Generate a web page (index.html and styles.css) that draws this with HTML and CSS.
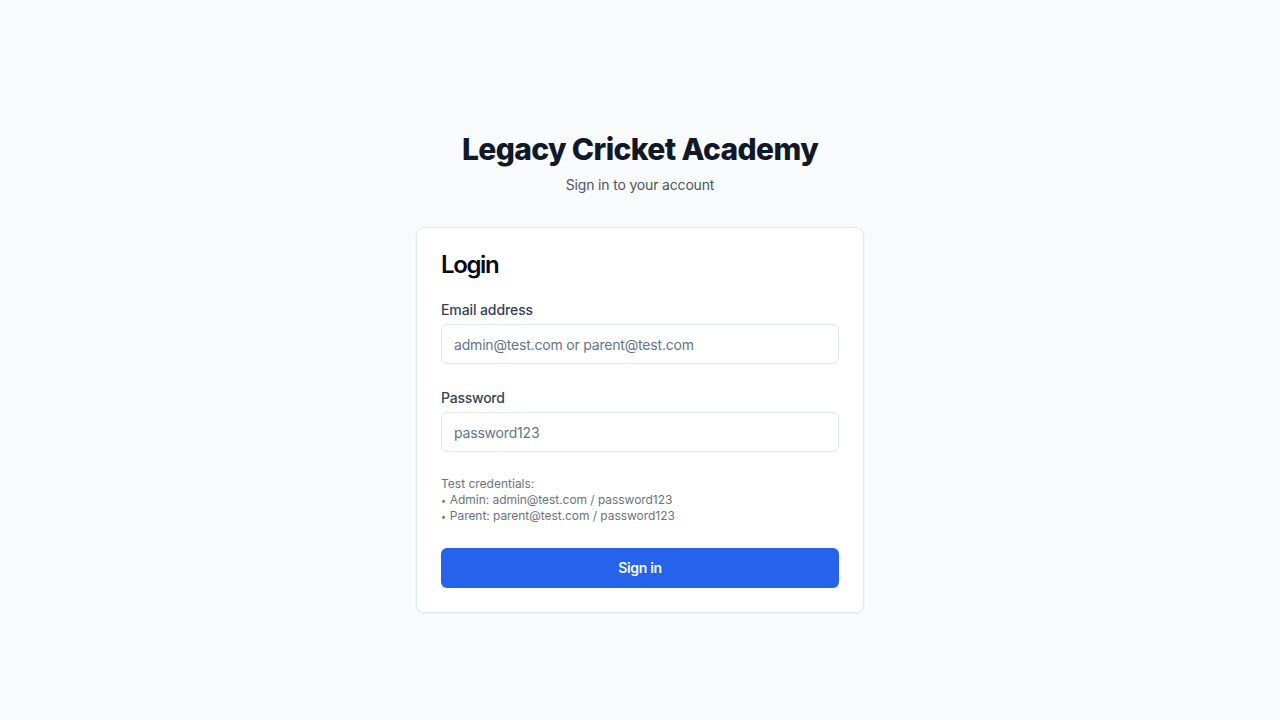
FILE: index.html
```html
<!DOCTYPE html>
<html lang="en">
<head>
<meta charset="utf-8">
<title>Legacy Cricket Academy</title>
<link rel="stylesheet" href="styles.css">
</head>
<body>
<main class="page">
  <header class="header">
    <h1 class="brand">Legacy Cricket Academy</h1>
    <p class="subtitle">Sign in to your account</p>
  </header>
  <section class="card">
    <h2 class="title">Login</h2>
    <form class="form">
      <div class="field">
        <label class="label" for="email">Email address</label>
        <input class="input" id="email" type="email" placeholder="admin@test.com or parent@test.com">
      </div>
      <div class="field">
        <label class="label label-password" for="password">Password</label>
        <input class="input" id="password" type="password" placeholder="password123">
      </div>
      <div class="hints">
        <p class="hint hint-title">Test credentials:</p>
        <p class="hint"><span class="bullet">•</span> Admin: admin@test.com / password123</p>
        <p class="hint"><span class="bullet">•</span> Parent: parent@test.com / password123</p>
      </div>
      <button class="button" type="button">Sign in</button>
    </form>
  </section>
</main>
</body>
</html>
```
FILE: styles.css
```css
* { box-sizing: border-box; margin: 0; }
body { font-family: Inter, sans-serif; background: #f9fafb; color: #020817; }
.page { min-height: 100vh; width: 448px; margin: 0 auto; display: flex; flex-direction: column; justify-content: center; padding-top: 24px; }
.header { text-align: center; padding-bottom: 32px; }
.brand { font-size: 30px; line-height: 36px; font-weight: 800; letter-spacing: -0.61px; color: #111827; }
.subtitle { margin-top: 8px; font-size: 14px; line-height: 20px; letter-spacing: -0.17px; color: #4b5563; }
.card { height: 386px; background: #fff; border: 1px solid #e2e8f0; border-radius: 8px; padding: 24px; box-shadow: 0 1px 2px rgba(0,0,0,.05); }
.title { padding-top: 1px; font-size: 24px; line-height: 24px; font-weight: 600; letter-spacing: -1.4px; }
.form { display: flex; flex-direction: column; gap: 24px; padding-top: 23px; }
.field { display: flex; flex-direction: column; gap: 4px; }
.label { font-size: 14px; line-height: 20px; font-weight: 500; letter-spacing: -0.1px; color: #374151; }
.label-password { letter-spacing: -0.24px; }
.input { width: 100%; height: 40px; padding: 8px 12px; border: 1px solid #e2e8f0; border-radius: 6px; font: 14px/20px Inter, sans-serif; letter-spacing: -0.19px; background: #fff; }
.input::placeholder { color: #64748b; opacity: 1; }
.hint { font-size: 12px; line-height: 16px; letter-spacing: -0.05px; color: #6b7280; }
.hint-title { letter-spacing: 0; }
.bullet { display: inline-block; width: 5.5px; font-size: 9px; line-height: 12px; }
.button { height: 40px; border: 0; border-radius: 6px; background: #2563eb; color: #f8fafc; font: 600 14px/20px Inter, sans-serif; letter-spacing: -0.3px; }
```
